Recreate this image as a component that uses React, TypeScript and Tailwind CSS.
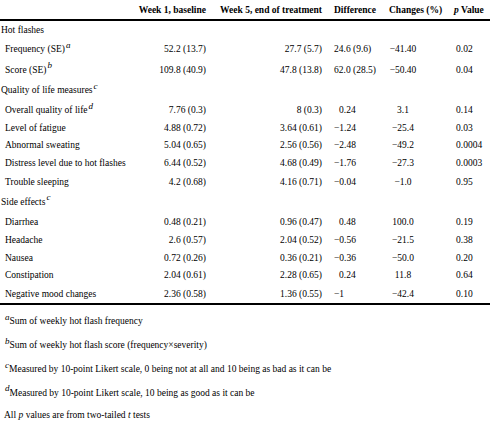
import React from 'react';

type Row =
  | { kind: 'section'; label: string; sup?: string; h: string }
  | {
      kind: 'item';
      label: string;
      sup?: string;
      h: string;
      w1: string;
      w5: string;
      diff: string;
      indent?: boolean;
      chg: string;
      p: string;
    };

const rows: Row[] = [
  { kind: 'section', label: 'Hot flashes', h: 'h-[18px]' },
  { kind: 'item', label: 'Frequency (SE)', sup: 'a', h: 'h-[20px]', w1: '52.2 (13.7)', w5: '27.7 (5.7)', diff: '24.6 (9.6)', chg: '−41.40', p: '0.02' },
  { kind: 'item', label: 'Score (SE)', sup: 'b', h: 'h-[21px]', w1: '109.8 (40.9)', w5: '47.8 (13.8)', diff: '62.0 (28.5)', chg: '−50.40', p: '0.04' },
  { kind: 'section', label: 'Quality of life measures', sup: 'c', h: 'h-[20px]' },
  { kind: 'item', label: 'Overall quality of life', sup: 'd', h: 'h-[20px]', w1: '7.76 (0.3)', w5: '8 (0.3)', diff: '0.24', indent: true, chg: '3.1', p: '0.14' },
  { kind: 'item', label: 'Level of fatigue', h: 'h-[16px]', w1: '4.88 (0.72)', w5: '3.64 (0.61)', diff: '−1.24', chg: '−25.4', p: '0.03' },
  { kind: 'item', label: 'Abnormal sweating', h: 'h-[18px]', w1: '5.04 (0.65)', w5: '2.56 (0.56)', diff: '−2.48', chg: '−49.2', p: '0.0004' },
  { kind: 'item', label: 'Distress level due to hot flashes', h: 'h-[18px]', w1: '6.44 (0.52)', w5: '4.68 (0.49)', diff: '−1.76', chg: '−27.3', p: '0.0003' },
  { kind: 'item', label: 'Trouble sleeping', h: 'h-[19px]', w1: '4.2 (0.68)', w5: '4.16 (0.71)', diff: '−0.04', chg: '−1.0', p: '0.95' },
  { kind: 'section', label: 'Side effects', sup: 'c', h: 'h-[21px]' },
  { kind: 'item', label: 'Diarrhea', h: 'h-[19px]', w1: '0.48 (0.21)', w5: '0.96 (0.47)', diff: '0.48', indent: true, chg: '100.0', p: '0.19' },
  { kind: 'item', label: 'Headache', h: 'h-[18px]', w1: '2.6 (0.57)', w5: '2.04 (0.52)', diff: '−0.56', chg: '−21.5', p: '0.38' },
  { kind: 'item', label: 'Nausea', h: 'h-[17px]', w1: '0.72 (0.26)', w5: '0.36 (0.21)', diff: '−0.36', chg: '−50.0', p: '0.20' },
  { kind: 'item', label: 'Constipation', h: 'h-[18px]', w1: '2.04 (0.61)', w5: '2.28 (0.65)', diff: '0.24', indent: true, chg: '11.8', p: '0.64' },
  { kind: 'item', label: 'Negative mood changes', h: 'h-[19px]', w1: '2.36 (0.58)', w5: '1.36 (0.55)', diff: '−1', chg: '−42.4', p: '0.10' },
];

const cols = 'grid grid-cols-[132px_74px_116px_67px_65px_36px] items-center whitespace-nowrap';

const Sup = ({ c }: { c: string }) => <sup className="italic text-[9px] ml-[1px]">{c}</sup>;

const App: React.FC = () => {
  return (
    <div className="w-[490px] h-[434px] bg-white text-black font-['Liberation_Serif','Times_New_Roman',serif] text-[9.5px] leading-[12px] overflow-hidden">
      {/* header */}
      <div className={`${cols} h-[21px] font-bold border-b-2 border-black`}>
        <div />
        <div className="text-right">Week 1, baseline</div>
        <div className="text-right">Week 5, end of treatment</div>
        <div className="pl-[12px]">Difference</div>
        <div>Changes (%)</div>
        <div>
          <span className="italic">p</span> Value
        </div>
      </div>

      {rows.map((r, i) =>
        r.kind === 'section' ? (
          <div key={i} className={`flex items-center pl-[1px] whitespace-nowrap ${r.h}`}>
            <span>
              {r.label}
              {r.sup && <Sup c={r.sup} />}
            </span>
          </div>
        ) : (
          <div key={i} className={`${cols} ${r.h}`}>
            <div className="pl-[5px]">
              {r.label}
              {r.sup && <Sup c={r.sup} />}
            </div>
            <div className="text-right">{r.w1}</div>
            <div className="text-right">{r.w5}</div>
            <div className={r.indent ? 'pl-[17px]' : 'pl-[12px]'}>{r.diff}</div>
            <div className="w-[28px] text-center">{r.chg}</div>
            <div className="pl-[2px]">{r.p}</div>
          </div>
        )
      )}

      <div className="border-t-2 border-black pt-[4px] pl-[4px] whitespace-nowrap">
        <div className="h-[24px] flex items-center">
          <span><Sup c="a" />Sum of weekly hot flash frequency</span>
        </div>
        <div className="h-[24px] flex items-center">
          <span><Sup c="b" />Sum of weekly hot flash score (frequency×severity)</span>
        </div>
        <div className="h-[24px] flex items-center">
          <span><Sup c="c" />Measured by 10-point Likert scale, 0 being not at all and 10 being as bad as it can be</span>
        </div>
        <div className="h-[23px] flex items-center">
          <span><Sup c="d" />Measured by 10-point Likert scale, 10 being as good as it can be</span>
        </div>
        <div className="h-[22px] flex items-center">
          <span>All <span className="italic">p</span> values are from two-tailed <span className="italic">t</span> tests</span>
        </div>
      </div>
    </div>
  );
};

export default App;
